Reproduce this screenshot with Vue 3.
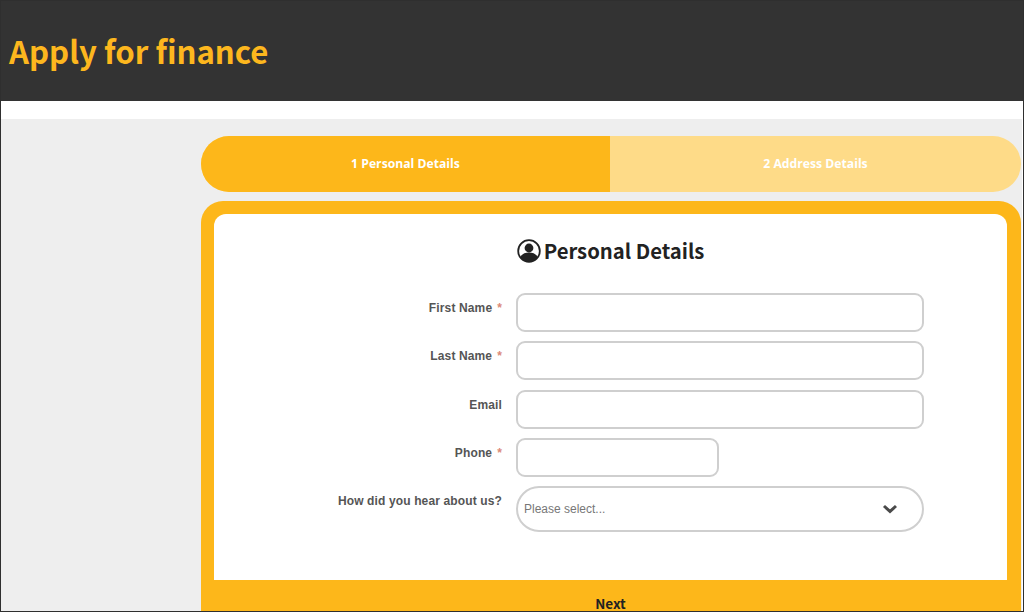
<template>
  <div class="page">
    <header class="top-bar">
      <h1>Apply for finance</h1>
    </header>

    <main class="content">
      <div class="wizard">
        <div class="steps">
          <div
            v-for="(step, index) in steps"
            :key="step"
            :class="['step', { active: index === 0 }]"
          >
            {{ index + 1 }} {{ step }}
          </div>
        </div>

        <div class="form-card">
          <div class="form-body">
            <h2 class="form-title">
              <svg class="user-icon" viewBox="0 0 24 24" aria-hidden="true">
                <circle cx="12" cy="12" r="10.8" fill="#fff" stroke="#222" stroke-width="1.8" />
                <circle cx="12" cy="9" r="4.4" fill="#222" />
                <path d="M3.4 18.2c1.4-3.6 4.8-4.8 8.6-4.8s7.2 1.2 8.6 4.8A10.8 10.8 0 0 1 12 22.8a10.8 10.8 0 0 1-8.6-4.6z" fill="#222" />
              </svg>
              Personal Details
            </h2>

            <div v-for="field in fields" :key="field.label" class="row">
              <label class="field-label">
                {{ field.label }}<span v-if="field.required" class="req">*</span>
              </label>
              <input type="text" :class="['field-input', { short: field.short }]" />
            </div>

            <div class="row select-row">
              <label class="field-label">How did you hear about us?</label>
              <div class="select-box">
                <span>Please select...</span>
                <svg class="chevron" viewBox="0 0 16 10" aria-hidden="true">
                  <path d="M2 2l6 5.4L14 2" fill="none" stroke="#4a4a4a" stroke-width="3" />
                </svg>
              </div>
            </div>
          </div>

          <div class="form-footer">Next</div>
        </div>
      </div>
    </main>
  </div>
</template>

<script setup>
const steps = ['Personal Details', 'Address Details']

const fields = [
  { label: 'First Name', required: true },
  { label: 'Last Name', required: true },
  { label: 'Email', required: false },
  { label: 'Phone', required: true, short: true }
]
</script>

<style>
html,
body {
  margin: 0;
  overflow: hidden;
  background: #fff;
}
</style>

<style scoped>
.page {
  box-sizing: border-box;
  width: 1024px;
  height: 612px;
  overflow: hidden;
  border: 1px solid #2f2f2f;
  background: #fff;
  display: flex;
  flex-direction: column;
}

.top-bar {
  flex: none;
  height: 100px;
  background: #333;
  display: flex;
  align-items: center;
  padding: 0 0 2px 8px;
  box-sizing: border-box;
}

.top-bar h1 {
  margin: 0;
  font: 700 31.2px "Noto Sans CJK SC", "Noto Sans", sans-serif;
  color: #fdb71e;
}

.content {
  flex: 1;
  min-height: 0;
  margin-top: 18px;
  margin-right: 1px;
  background: #eee;
  padding: 17px 0 0 200px;
}

.wizard {
  width: 820px;
}

.steps {
  display: flex;
  height: 56px;
  border-radius: 28px;
  overflow: hidden;
  background: #fedb88;
}

.step {
  flex: 1 1 0;
  display: flex;
  align-items: center;
  justify-content: center;
  padding-bottom: 1px;
  box-sizing: border-box;
  font: 700 12.2px "Open Sans", "DejaVu Sans", sans-serif;
  color: #fff;
}

.step.active {
  flex: none;
  width: 409px;
  background: #fdb71a;
}

.form-card {
  margin-top: 9px;
  background: #fdb71a;
  border-radius: 22px 22px 0 0;
  padding: 13px 14px 0 13px;
}

.form-body {
  height: 366px;
  box-sizing: border-box;
  background: #fff;
  border-radius: 12px 12px 0 0;
  padding-top: 19px;
}

.form-title {
  margin: 0 0 25.8px;
  display: flex;
  align-items: center;
  justify-content: center;
  gap: 3px;
  height: 34px;
  font: 700 20.25px "Noto Sans CJK SC", "Noto Sans", sans-serif;
  color: #222;
}

.user-icon {
  width: 24px;
  height: 24px;
  margin-top: 2px;
}

.row {
  display: flex;
  align-items: flex-start;
  margin-bottom: 9.4px;
}

.field-label {
  width: 288px;
  margin-right: 14px;
  padding-top: 8px;
  text-align: right;
  font: 700 12px/14px "Liberation Sans", Arial, sans-serif;
  letter-spacing: 0.13px;
  color: #555;
}

.req {
  margin-left: 5px;
  color: #dc8a78;
}

.field-input {
  box-sizing: border-box;
  width: 408px;
  height: 39px;
  padding: 0 8px;
  background: #fff;
  border: 2px solid #cfcfcf;
  border-radius: 9px;
  outline: none;
}

.field-input.short {
  width: 203px;
}

.select-box {
  box-sizing: border-box;
  width: 408px;
  height: 46px;
  padding: 0 24px 0 6px;
  display: flex;
  align-items: center;
  justify-content: space-between;
  border: 2px solid #cfcfcf;
  border-radius: 23px;
  font: 12px "Liberation Sans", Arial, sans-serif;
  color: #777;
}

.chevron {
  width: 16px;
  height: 10px;
}

.form-footer {
  padding-top: 13px;
  text-align: center;
  font: 700 13.5px "Noto Sans CJK SC", "Noto Sans", sans-serif;
  color: #222;
}
</style>
